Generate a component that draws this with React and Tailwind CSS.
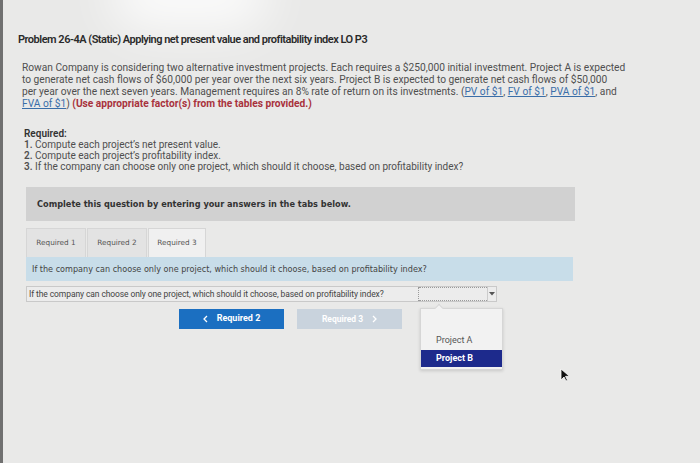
import React from 'react';

const body = { fontFamily: 'Roboto, "Liberation Sans", sans-serif' };
const ui = { fontFamily: '"DejaVu Sans", Verdana, sans-serif' };

function Link({ children }) {
  return <span className="text-[#3a6ea8] underline">{children}</span>;
}

function Chevron({ dir = 'left', color = '#fff' }) {
  return (
    <svg width="5" height="8" viewBox="0 0 5 8">
      <path d={dir === 'left' ? 'M4 1L1 4l3 3' : 'M1 1l3 3-3 3'} fill="none" stroke={color} strokeWidth="1.3" />
    </svg>
  );
}

export default function App() {
  return (
    <div className="relative w-[700px] h-[463px] overflow-hidden bg-[#e9e9e8] flex" style={body}>
      {/* glare from the photo */}
      <div className="pointer-events-none absolute left-[110px] top-[-40px] w-[160px] h-[70px] rounded-full bg-white/80 blur-xl" />

      <div className="w-[3px] shrink-0 bg-[#707070]" />

      <div className="relative flex-1 pt-[33px] pl-[15px]">
        <h1 className="text-[11px] font-semibold text-[#2a2a2a] tracking-[-0.5px] leading-[14px]">
          Problem 26-4A (Static) Applying net present value and profitability index LO P3
        </h1>

        <p className="mt-[15px] ml-[4px] w-[640px] text-[10.2px] leading-[12px] text-[#4f4f4f]">
          Rowan Company is considering two alternative investment projects. Each requires a $250,000 initial investment. Project A is expected<br />
          to generate net cash flows of $60,000 per year over the next six years. Project B is expected to generate net cash flows of $50,000<br />
          per year over the next seven years. Management requires an 8% rate of return on its investments. (<Link>PV of $1</Link>, <Link>FV of $1</Link>, <Link>PVA of $1</Link>, and<br />
          <Link>FVA of $1</Link>) <span className="font-bold text-[#a8323c]">(Use appropriate factor(s) from the tables provided.)</span>
        </p>

        <div className="mt-[18px] ml-[6px] text-[10px] leading-[11px] text-[#4f4f4f]">
          <div className="font-semibold text-[#333]">Required:</div>
          <div><span className="font-semibold">1.</span> Compute each project’s net present value.</div>
          <div><span className="font-semibold">2.</span> Compute each project’s profitability index.</div>
          <div><span className="font-semibold">3.</span> If the company can choose only one project, which should it choose, based on profitability index?</div>
        </div>

        <div className="mt-[15px] ml-[8px] w-[549px] h-[34px] bg-[#d1d1d1] flex items-center pl-[11px]" style={ui}>
          <span className="text-[8.2px] font-bold text-[#333]">Complete this question by entering your answers in the tabs below.</span>
        </div>

        <div className="mt-[7px] ml-[8px] w-[549px]" style={ui}>
          <div className="flex items-end h-[29px]">
            {['Required 1', 'Required 2'].map((t) => (
              <div key={t} className="h-[29px] w-[60px] mr-px border border-b-0 border-[#d6d6d6] bg-[#e3e3e3] flex items-center justify-center text-[7.3px] text-[#555]">
                {t}
              </div>
            ))}
            <div className="h-[29px] w-[58px] border border-b-0 border-[#d6d6d6] bg-[#f0f0f0] flex items-center justify-center text-[7.3px] text-[#555]">
              Required 3
            </div>
          </div>
          <div className="h-[24px] w-[547px] bg-[#c8dde9] flex items-center pl-[6px] text-[8.1px] text-[#444]">
            If the company can choose only one project, which should it choose, based on profitability index?
          </div>
          <div className="mt-[5px] flex items-stretch h-[16px] w-[471px] border border-[#c9c9c9] bg-[#ececec]" style={body}>
            <div className="flex-1 pl-[2px] text-[8.5px] leading-[14px] text-[#444] tracking-[-0.1px]">
              If the company can choose only one project, which should it choose, based on profitability index?
            </div>
            <div className="w-[78px] border-l border-dotted border-[#9a9a9a] flex items-stretch">
              <div className="flex-1 border-t border-b border-dotted border-[#9a9a9a]" />
              <div className="w-[9px] border-l border-[#ccc] flex items-center justify-center">
                <svg width="6" height="4" viewBox="0 0 6 4"><path d="M0 0h6L3 3.5z" fill="#555" /></svg>
              </div>
            </div>
          </div>

          <div className="mt-[7px] flex" style={body}>
            <div className="ml-[153px] w-[105px] h-[20px] bg-[#1b6fc1] flex items-center justify-center gap-[9px] text-[9px] font-bold text-white">
              <Chevron dir="left" /><span>Required 2</span>
            </div>
            <div className="ml-[13px] w-[105px] h-[20px] bg-[#c9d3dd] flex items-center justify-center gap-[9px] text-[8.5px] font-bold text-white">
              <span>Required 3</span><Chevron dir="right" />
            </div>
          </div>
        </div>

        {/* open dropdown menu */}
        <div className="absolute left-[417px] top-[308px] w-[83px] h-[62px] bg-[#f2f2f2] border border-[#d6d6d6] shadow-[0_1px_3px_rgba(0,0,0,0.15)] flex flex-col justify-end pb-[2px]">
          <div className="absolute -top-[4px] left-[15px] w-[6px] h-[6px] rotate-45 bg-[#f2f2f2] border-l border-t border-[#d6d6d6]" />
          <div className="h-[18px] pl-[15px] flex items-center text-[9px] text-[#555]">Project A</div>
          <div className="h-[17px] pl-[15px] flex items-center text-[9px] font-bold text-white bg-[#1d2a8c]">Project B</div>
        </div>

        {/* mouse pointer */}
        <svg className="absolute left-[557px] top-[368px]" width="10" height="14" viewBox="0 0 10 14">
          <path d="M1 1v11l3-3 2 4 1.5-.7-2-4h4z" fill="#111" stroke="#fff" strokeWidth="0.8" />
        </svg>
      </div>
    </div>
  );
}
